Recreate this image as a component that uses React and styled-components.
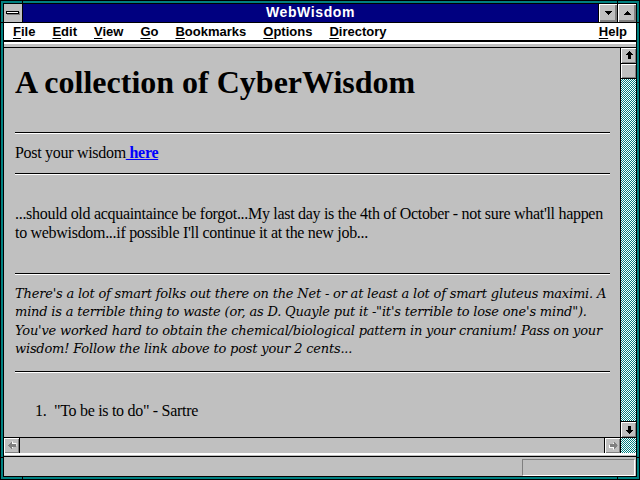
import styled, { createGlobalStyle } from 'styled-components';

const GlobalStyle = createGlobalStyle`
  html, body {
    margin: 0;
    padding: 0;
    background: #000;
  }
  body {
    width: 640px;
    height: 480px;
    overflow: hidden;
  }
`;

const Frame = styled.div`
  position: relative;
  box-sizing: border-box;
  width: 640px;
  height: 480px;
  padding: 2px;
  background: #008080;
  border: 1px solid #000;
`;
const Notch = styled.div`
  position: absolute;
  background: #000;
  left: ${p => p.$x}px;
  top: ${p => p.$y}px;
  width: ${p => p.$w}px;
  height: ${p => p.$h}px;
`;
const Inner = styled.div`
  box-sizing: border-box;
  height: 100%;
  display: flex;
  flex-direction: column;
  border: 1px solid #000;
  background: #c0c0c0;
`;

const TitleBar = styled.div`
  display: flex;
  height: 18px;
  flex-shrink: 0;
  border-bottom: 1px solid #000;
  background: #000080;
`;
const SysBox = styled.div`
  width: 18px;
  display: flex;
  align-items: center;
  justify-content: center;
  border-right: 1px solid #000;
  background: #c0c0c0;
`;
const SysBar = styled.div`
  width: 11px;
  height: 1px;
  margin: 0 1px 1px 0;
  background: #fff;
  border: 1px solid #000;
  box-shadow: 1px 1px 0 #808080;
`;
const TitleText = styled.div`
  flex: 1;
  text-align: center;
  color: #fff;
  font: bold 14px/17px 'Liberation Sans', Arial, sans-serif;
  letter-spacing: 0.6px;
`;
const TitleButton = styled.div`
  width: 18px;
  display: flex;
  align-items: center;
  justify-content: center;
  border-left: 1px solid #000;
  background: #c0c0c0;
  box-shadow: inset 1px 1px 0 #fff, inset -1px -1px 0 #808080,
    inset -2px -2px 0 #808080;
`;

const MenuBar = styled.div`
  display: flex;
  gap: 17px;
  height: 17px;
  flex-shrink: 0;
  padding: 0 9px 0 9px;
  background: #fff;
  border-bottom: 2px solid #000;
  font: bold 13px/17px 'Liberation Sans', Arial, sans-serif;
  color: #000;
`;
const MenuItem = styled.span`
  margin-left: ${p => (p.$right ? 'auto' : '0')};
  u {
    text-underline-offset: 2px;
  }
`;
const BandEdge = styled.div`
  flex-shrink: 0;
  height: ${p => p.$gray}px;
  border-top: 2px solid #fff;
  border-bottom: 1px solid #000;
  background: #c0c0c0;
`;

const Main = styled.div`
  flex: 1;
  display: flex;
  min-height: 0;
`;
const LeftColumn = styled.div`
  flex: 1;
  display: flex;
  flex-direction: column;
  min-width: 0;
`;
const Content = styled.div`
  flex: 1;
  overflow: hidden;
  padding: 0 10px 0 11px;
  font-family: 'Liberation Serif', 'Times New Roman', serif;
  font-size: 16px;
  color: #000;
`;
const Heading = styled.h1`
  margin: 16px 0 0;
  font-size: 32px;
  line-height: 36px;
  font-weight: bold;
`;
const Rule = styled.hr`
  height: 0;
  margin: ${p => p.$top}px 0 0;
  border: none;
  border-top: 1px solid #000;
  border-bottom: 1px solid #fff;
`;
const Para = styled.p`
  margin: ${p => p.$top}px 0 0;
  line-height: ${p => p.$lh || 18}px;
  letter-spacing: -0.3px;
`;
const Link = styled.a`
  color: #0000ff;
  font-weight: bold;
  text-decoration: underline;
`;
const Quote = styled.p`
  margin: ${p => p.$top}px 0 0;
  font-family: 'DejaVu Serif', serif;
  font-style: italic;
  font-size: 13px;
  line-height: 18.4px;
  letter-spacing: -0.2px;
`;
const List = styled.ol`
  margin: ${p => p.$top}px 0 0;
  padding: 0 0 0 20px;
  list-style: none;
  line-height: 18px;
  letter-spacing: -0.3px;
`;
const ListItem = styled.li`
  display: flex;
`;
const Num = styled.span`
  width: 19px;
`;

const HScroll = styled.div`
  display: flex;
  height: 15px;
  flex-shrink: 0;
  border-top: 1px solid #000;
  background: #c0c0c0;
`;
const VScroll = styled.div`
  width: 15px;
  display: flex;
  flex-direction: column;
  border-left: 1px solid #000;
`;
const ScrollButton = styled.div`
  box-sizing: content-box;
  width: 15px;
  height: ${p => p.$h || 15}px;
  flex-shrink: 0;
  display: flex;
  align-items: center;
  justify-content: center;
  background: #c0c0c0;
  box-shadow: inset 1px 1px 0 #fff, inset -1px -1px 0 #808080;
  border-left: ${p => (p.$bl ? '1px solid #000' : 'none')};
  border-right: ${p => (p.$br ? '1px solid #000' : 'none')};
  border-top: ${p => (p.$bt ? '1px solid #000' : 'none')};
  border-bottom: ${p => (p.$bb ? '1px solid #000' : 'none')};
`;
const Track = styled.div`
  flex: 1;
  background: ${p =>
    p.$checked
      ? 'repeating-conic-gradient(#008080 0 25%, #ffffff 0 50%) 0 0 / 2px 2px'
      : '#c0c0c0'};
`;
const Corner = styled.div`
  height: 15px;
  flex-shrink: 0;
  background: repeating-conic-gradient(#008080 0 25%, #ffffff 0 50%) 0 0 / 2px 2px;
`;

const StatusBar = styled.div`
  height: 19px;
  flex-shrink: 0;
  display: flex;
  justify-content: flex-end;
  padding: 2px 1px 0 0;
  box-sizing: border-box;
  background: #c0c0c0;
`;
const StatusBox = styled.div`
  box-sizing: border-box;
  width: 113px;
  height: 17px;
  border-top: 1px solid #808080;
  border-left: 1px solid #808080;
  border-bottom: 1px solid #fff;
  border-right: 1px solid #fff;
`;

const ARROW = 'M3 0h1v1h1v1h1v1h1v1h-2v4h-3v-4h-2v-1h1v-1h1v-1h1z';
const TRI = 'M0 0h7v1h-1v1h-1v1h-1v1h-1v-1h-1v-1h-1v-1h-1z';

function Arrow({ rotate = 0, disabled }) {
  return (
    <svg width="8" height="9" viewBox="-0.5 0 8 9" shapeRendering="crispEdges"
      style={{ transform: `rotate(${rotate}deg)` }}>
      {disabled ? (
        <>
          <path d={ARROW} fill="#fff" transform="translate(1 1)" />
          <path d={ARROW} fill="#808080" />
        </>
      ) : (
        <path d={ARROW} fill="#000" />
      )}
    </svg>
  );
}

function Triangle({ up }) {
  return (
    <svg width="7" height="4" viewBox="0 0 7 4" shapeRendering="crispEdges"
      style={{ transform: up ? 'rotate(180deg)' : 'none', marginBottom: 1 }}>
      <path d={TRI} fill="#000" />
    </svg>
  );
}

const menus = ['File', 'Edit', 'View', 'Go', 'Bookmarks', 'Options', 'Directory'];

export default function App() {
  return (
    <>
      <GlobalStyle />
      <Frame>
        <Notch $x={21} $y={-1} $w={1} $h={4} />
        <Notch $x={21} $y={475} $w={1} $h={4} />
        <Notch $x={616} $y={-1} $w={1} $h={4} />
        <Notch $x={616} $y={475} $w={1} $h={4} />
        <Notch $x={-1} $y={21} $w={4} $h={1} />
        <Notch $x={635} $y={21} $w={4} $h={1} />
        <Notch $x={-1} $y={456} $w={4} $h={1} />
        <Notch $x={635} $y={456} $w={4} $h={1} />
        <Inner>
          <TitleBar>
            <SysBox>
              <SysBar />
            </SysBox>
            <TitleText>WebWisdom</TitleText>
            <TitleButton>
              <Triangle />
            </TitleButton>
            <TitleButton>
              <Triangle up />
            </TitleButton>
          </TitleBar>
          <MenuBar>
            {menus.map(m => (
              <MenuItem key={m}>
                <u>{m[0]}</u>
                {m.slice(1)}
              </MenuItem>
            ))}
            <MenuItem $right>
              <u>H</u>elp
            </MenuItem>
          </MenuBar>
          <BandEdge $gray={3} />
          <Main>
            <LeftColumn>
              <Content>
                <Heading>A collection of CyberWisdom</Heading>
                <Rule $top={32} />
                <Para $top={10}>
                  Post your wisdom<Link href="#"> here</Link>
                </Para>
                <Rule $top={11} />
                <Para $top={29} $lh={19}>
                  ...should old acquaintaince be forgot...My last day is the 4th of
                  October - not sure what'll happen to webwisdom...if possible I'll
                  continue it at the new job...
                </Para>
                <Rule $top={31} />
                <Quote $top={10}>
                  There's a lot of smart folks out there on the Net - or at least a lot
                  of smart gluteus maximi. A mind is a terrible thing to waste (or, as
                  D. Quayle put it -"it's terrible to lose one's mind"). You've worked
                  hard to obtain the chemical/biological pattern in your cranium! Pass
                  on your wisdom! Follow the link above to post your 2 cents...
                </Quote>
                <Rule $top={12} />
                <List $top={29}>
                  <ListItem>
                    <Num>1.</Num>
                    <span>"To be is to do" - Sartre</span>
                  </ListItem>
                </List>
              </Content>
              <HScroll>
                <ScrollButton $br>
                  <Arrow rotate={-90} disabled />
                </ScrollButton>
                <Track />
                <ScrollButton $bl>
                  <Arrow rotate={90} disabled />
                </ScrollButton>
              </HScroll>
            </LeftColumn>
            <VScroll>
              <ScrollButton $bb>
                <Arrow />
              </ScrollButton>
              <ScrollButton $h={14} $bb />
              <Track $checked />
              <ScrollButton $bt $bb>
                <Arrow rotate={180} />
              </ScrollButton>
              <Corner />
            </VScroll>
          </Main>
          <BandEdge $gray={1} />
          <StatusBar>
            <StatusBox />
          </StatusBar>
        </Inner>
      </Frame>
    </>
  );
}
